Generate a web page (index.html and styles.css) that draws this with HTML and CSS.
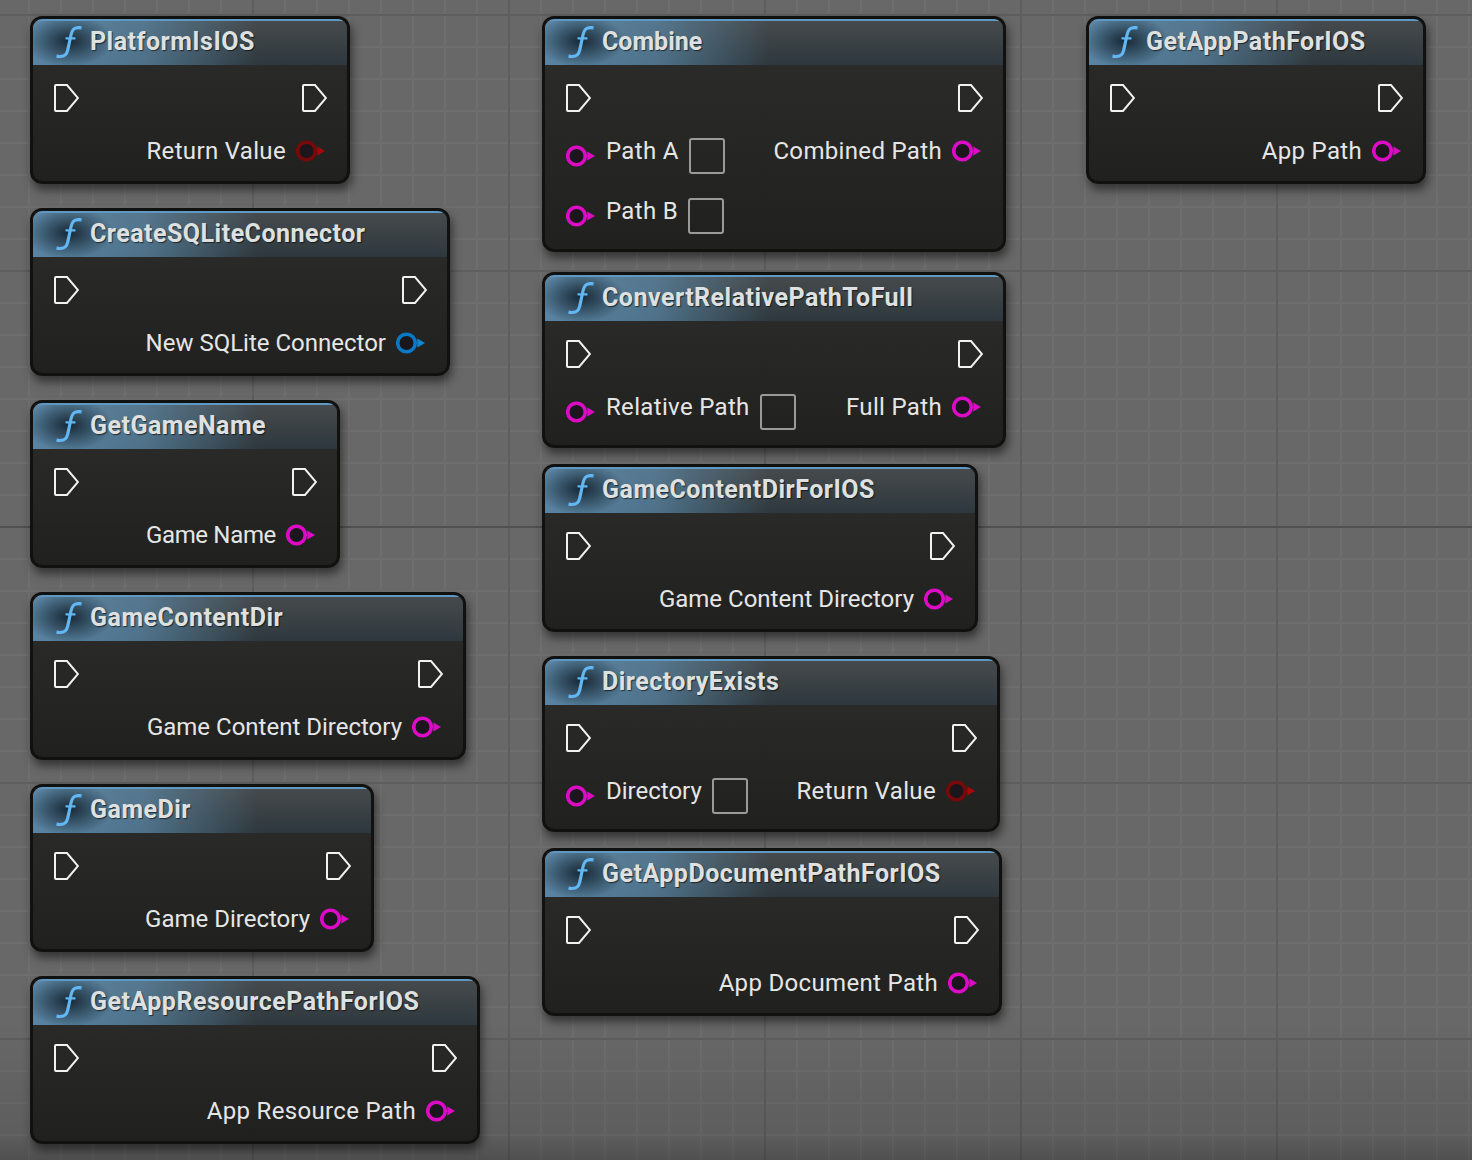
FILE: index.html
```html
<!DOCTYPE html>
<html lang="en">
<head>
    <meta charset="UTF-8">
    <meta name="viewport" content="width=device-width, initial-scale=1.0">
    <title>Blueprint Nodes</title>
    <link rel="stylesheet" href="styles.css">
</head>
<body>
    <svg class="defs" width="0" height="0">
        <symbol id="fn" viewBox="0 0 26 32">
            <path d="M25.500 1.800C19 .8 16.400 2.600 15.200 8L11.600 24.600C10.400 29.800 7.400 31.200 .5 30.200" fill="none" stroke="#62b6f2" stroke-width="3.200"/>
            <path d="M9.500 12.400H19.500" fill="none" stroke="#62b6f2" stroke-width="2.200"/>
        </symbol>
        <symbol id="exec" viewBox="0 0 25 28">
            <path d="M2 1H13L24 14L13 27H2C1.400 27 1 26.600 1 26V2C1 1.400 1.400 1 2 1Z" fill="none" stroke="#f2f2f2" stroke-width="2"/>
        </symbol>
        <symbol id="data" viewBox="0 0 30 22">
            <path d="M21.300 6.500L29 11L21.300 15.500Z" fill="var(--arrow, currentColor)"/>
            <circle cx="10.500" cy="11" r="8.800" fill="#1a161b" stroke="currentColor" stroke-width="3.600"/>
        </symbol>
    </svg>

    <main class="canvas">
        <section class="column column-a">
            <article class="node w320">
                <header class="node-head"><svg class="fn"><use href="#fn"/></svg><h2>PlatformIsIOS</h2></header>
                <div class="node-body">
                    <div class="pins"><svg class="exec"><use href="#exec"/></svg></div>
                    <div class="pins pins-out">
                        <svg class="exec"><use href="#exec"/></svg>
                        <div class="out"><span class="wide">Return Value</span><svg class="pin red"><use href="#data"/></svg></div>
                    </div>
                </div>
            </article>
            <article class="node w420">
                <header class="node-head"><svg class="fn"><use href="#fn"/></svg><h2>CreateSQLiteConnector</h2></header>
                <div class="node-body">
                    <div class="pins"><svg class="exec"><use href="#exec"/></svg></div>
                    <div class="pins pins-out">
                        <svg class="exec"><use href="#exec"/></svg>
                        <div class="out"><span>New SQLite Connector</span><svg class="pin blue"><use href="#data"/></svg></div>
                    </div>
                </div>
            </article>
            <article class="node w310">
                <header class="node-head"><svg class="fn"><use href="#fn"/></svg><h2>GetGameName</h2></header>
                <div class="node-body">
                    <div class="pins"><svg class="exec"><use href="#exec"/></svg></div>
                    <div class="pins pins-out">
                        <svg class="exec"><use href="#exec"/></svg>
                        <div class="out"><span class="narrow">Game Name</span><svg class="pin"><use href="#data"/></svg></div>
                    </div>
                </div>
            </article>
            <article class="node w436">
                <header class="node-head"><svg class="fn"><use href="#fn"/></svg><h2>GameContentDir</h2></header>
                <div class="node-body">
                    <div class="pins"><svg class="exec"><use href="#exec"/></svg></div>
                    <div class="pins pins-out">
                        <svg class="exec"><use href="#exec"/></svg>
                        <div class="out"><span>Game Content Directory</span><svg class="pin"><use href="#data"/></svg></div>
                    </div>
                </div>
            </article>
            <article class="node w344">
                <header class="node-head"><svg class="fn"><use href="#fn"/></svg><h2>GameDir</h2></header>
                <div class="node-body">
                    <div class="pins"><svg class="exec"><use href="#exec"/></svg></div>
                    <div class="pins pins-out">
                        <svg class="exec"><use href="#exec"/></svg>
                        <div class="out"><span>Game Directory</span><svg class="pin"><use href="#data"/></svg></div>
                    </div>
                </div>
            </article>
            <article class="node w450">
                <header class="node-head"><svg class="fn"><use href="#fn"/></svg><h2>GetAppResourcePathForIOS</h2></header>
                <div class="node-body">
                    <div class="pins"><svg class="exec"><use href="#exec"/></svg></div>
                    <div class="pins pins-out">
                        <svg class="exec"><use href="#exec"/></svg>
                        <div class="out"><span class="wide">App Resource Path</span><svg class="pin"><use href="#data"/></svg></div>
                    </div>
                </div>
            </article>
        </section>

        <section class="column column-b">
            <article class="node w464">
                <header class="node-head"><svg class="fn"><use href="#fn"/></svg><h2 class="tight">Combine</h2></header>
                <div class="node-body">
                    <div class="pins">
                        <svg class="exec"><use href="#exec"/></svg>
                        <div class="in"><svg class="pin"><use href="#data"/></svg><span class="wide">Path A</span><i class="field"></i></div>
                        <div class="in"><svg class="pin"><use href="#data"/></svg><span class="wide">Path B</span><i class="field"></i></div>
                    </div>
                    <div class="pins pins-out">
                        <svg class="exec"><use href="#exec"/></svg>
                        <div class="out"><span class="wide">Combined Path</span><svg class="pin"><use href="#data"/></svg></div>
                    </div>
                </div>
            </article>
            <article class="node w464 gap-20">
                <header class="node-head"><svg class="fn"><use href="#fn"/></svg><h2>ConvertRelativePathToFull</h2></header>
                <div class="node-body">
                    <div class="pins">
                        <svg class="exec"><use href="#exec"/></svg>
                        <div class="in"><svg class="pin"><use href="#data"/></svg><span class="wide">Relative Path</span><i class="field"></i></div>
                    </div>
                    <div class="pins pins-out">
                        <svg class="exec"><use href="#exec"/></svg>
                        <div class="out"><span class="wide">Full Path</span><svg class="pin"><use href="#data"/></svg></div>
                    </div>
                </div>
            </article>
            <article class="node w436 gap-16">
                <header class="node-head"><svg class="fn"><use href="#fn"/></svg><h2>GameContentDirForIOS</h2></header>
                <div class="node-body">
                    <div class="pins"><svg class="exec"><use href="#exec"/></svg></div>
                    <div class="pins pins-out">
                        <svg class="exec"><use href="#exec"/></svg>
                        <div class="out"><span>Game Content Directory</span><svg class="pin"><use href="#data"/></svg></div>
                    </div>
                </div>
            </article>
            <article class="node w458 gap-24">
                <header class="node-head"><svg class="fn"><use href="#fn"/></svg><h2>DirectoryExists</h2></header>
                <div class="node-body">
                    <div class="pins">
                        <svg class="exec"><use href="#exec"/></svg>
                        <div class="in"><svg class="pin"><use href="#data"/></svg><span>Directory</span><i class="field"></i></div>
                    </div>
                    <div class="pins pins-out">
                        <svg class="exec"><use href="#exec"/></svg>
                        <div class="out"><span class="wide">Return Value</span><svg class="pin red"><use href="#data"/></svg></div>
                    </div>
                </div>
            </article>
            <article class="node w460 gap-16">
                <header class="node-head"><svg class="fn"><use href="#fn"/></svg><h2>GetAppDocumentPathForIOS</h2></header>
                <div class="node-body">
                    <div class="pins"><svg class="exec"><use href="#exec"/></svg></div>
                    <div class="pins pins-out">
                        <svg class="exec"><use href="#exec"/></svg>
                        <div class="out"><span class="wide">App Document Path</span><svg class="pin"><use href="#data"/></svg></div>
                    </div>
                </div>
            </article>
        </section>

        <section class="column">
            <article class="node w340">
                <header class="node-head"><svg class="fn"><use href="#fn"/></svg><h2>GetAppPathForIOS</h2></header>
                <div class="node-body">
                    <div class="pins"><svg class="exec"><use href="#exec"/></svg></div>
                    <div class="pins pins-out">
                        <svg class="exec"><use href="#exec"/></svg>
                        <div class="out"><span class="wide">App Path</span><svg class="pin"><use href="#data"/></svg></div>
                    </div>
                </div>
            </article>
        </section>
    </main>
</body>
</html>
```

FILE: styles.css
```css
html, body {
    margin: 0;
    padding: 0;
    height: 100%;
    overflow: hidden;
}

body {
    font-family: Roboto, "Liberation Sans", sans-serif;
    color: #e6e6e6;
    background-color: #686868;
}

.defs {
    display: block;
    height: 0;
}

.canvas {
    display: flex;
    align-items: flex-start;
    box-sizing: border-box;
    height: 1160px;
    padding: 16px 0 0 30px;
    background-color: #686868;
    background-image:
        linear-gradient(to bottom, rgba(0, 0, 0, 0) 1020px, rgba(0, 0, 0, 0.1) 1135px, rgba(0, 0, 0, 0.24) 1160px),
        linear-gradient(to bottom, rgba(0, 0, 0, 0) 526px, #505050 526px, #505050 528px, rgba(0, 0, 0, 0) 528px),
        linear-gradient(to right, #5e5e5e 2px, rgba(0, 0, 0, 0) 2px),
        linear-gradient(to bottom, #5e5e5e 2px, rgba(0, 0, 0, 0) 2px),
        linear-gradient(to right, #6e6e6e 2px, rgba(0, 0, 0, 0) 2px),
        linear-gradient(to bottom, #6e6e6e 2px, rgba(0, 0, 0, 0) 2px);
    background-size: auto, auto, 256px 256px, 256px 256px, 32px 32px, 32px 32px;
    background-position: 0 0, 0 0, 252px 14px, 252px 14px, 28px 14px, 28px 14px;
}

.column {
    display: flex;
    flex-direction: column;
    flex: none;
}

.column-a {
    width: 512px;
    gap: 24px;
}

.column-b {
    width: 544px;
}

.gap-16 { margin-top: 16px; }
.gap-20 { margin-top: 20px; }
.gap-24 { margin-top: 24px; }

.w310 { width: 310px; }
.w320 { width: 320px; }
.w340 { width: 340px; }
.w344 { width: 344px; }
.w420 { width: 420px; }
.w436 { width: 436px; }
.w450 { width: 450px; }
.w458 { width: 458px; }
.w460 { width: 460px; }
.w464 { width: 464px; }

.node {
    box-sizing: border-box;
    border: 3px solid #111210;
    border-radius: 12px;
    overflow: hidden;
    background: linear-gradient(to bottom, rgba(43, 44, 41, 0.97), rgba(30, 31, 29, 0.97));
    box-shadow: 2px 6px 10px rgba(0, 0, 0, 0.5);
}

.node-head {
    display: flex;
    align-items: center;
    box-sizing: border-box;
    height: 46px;
    padding-left: 23px;
    border-top: 2px solid #5f98c2;
    background:
        radial-gradient(ellipse 44px 26px at 36px 20px, rgba(20, 36, 48, 0.95), rgba(20, 36, 48, 0)),
        linear-gradient(to right, rgba(96, 145, 180, 0.85), rgba(92, 138, 170, 0.7) 110px, rgba(92, 138, 170, 0) 225px),
        linear-gradient(to bottom, #464a4c, #2d383e);
}

.node-head h2 {
    margin: 0 0 2px 8px;
    font-size: 25px;
    font-weight: 700;
    line-height: 30px;
    letter-spacing: 0.48px;
    color: #dfe1e1;
    text-shadow: 1px 1px 1px rgba(0, 0, 0, 0.6);
}

.node-head h2.tight {
    letter-spacing: 0;
}

.fn {
    width: 26px;
    height: 32px;
    margin-bottom: 2px;
    flex: none;
}

.node-body {
    display: flex;
    justify-content: space-between;
}

.pins {
    display: flex;
    flex-direction: column;
    align-items: flex-start;
    padding: 19px 0 15px 21px;
}

.pins-out {
    align-items: flex-end;
    padding: 19px 21px 19px 0;
}

.pins-out .exec {
    margin-right: -1px;
}

.exec {
    display: block;
    width: 25px;
    height: 28px;
    margin-bottom: 26px;
}

.in {
    display: flex;
    align-items: center;
    height: 36px;
    margin-bottom: 24px;
    font-size: 24px;
}

.in:last-child {
    margin-bottom: 0;
}

.in span {
    margin: 0 10px 10px 10px;
}

.out {
    display: flex;
    align-items: center;
    gap: 10px;
    height: 22px;
    margin-top: 2px;
    font-size: 24px;
    white-space: nowrap;
}

.wide { letter-spacing: 0.33px; }
.narrow { letter-spacing: -0.33px; }

.pin {
    display: block;
    flex: none;
    width: 30px;
    height: 22px;
    color: #dc0cc6;
}

.pin.blue {
    color: #0a78c4;
    --arrow: #0d88d8;
}

.pin.red {
    color: #760909;
    --arrow: #a80608;
}

.field {
    display: block;
    box-sizing: border-box;
    width: 36px;
    height: 36px;
    border: 2px solid #9a9a9a;
    border-radius: 3px;
}
```
